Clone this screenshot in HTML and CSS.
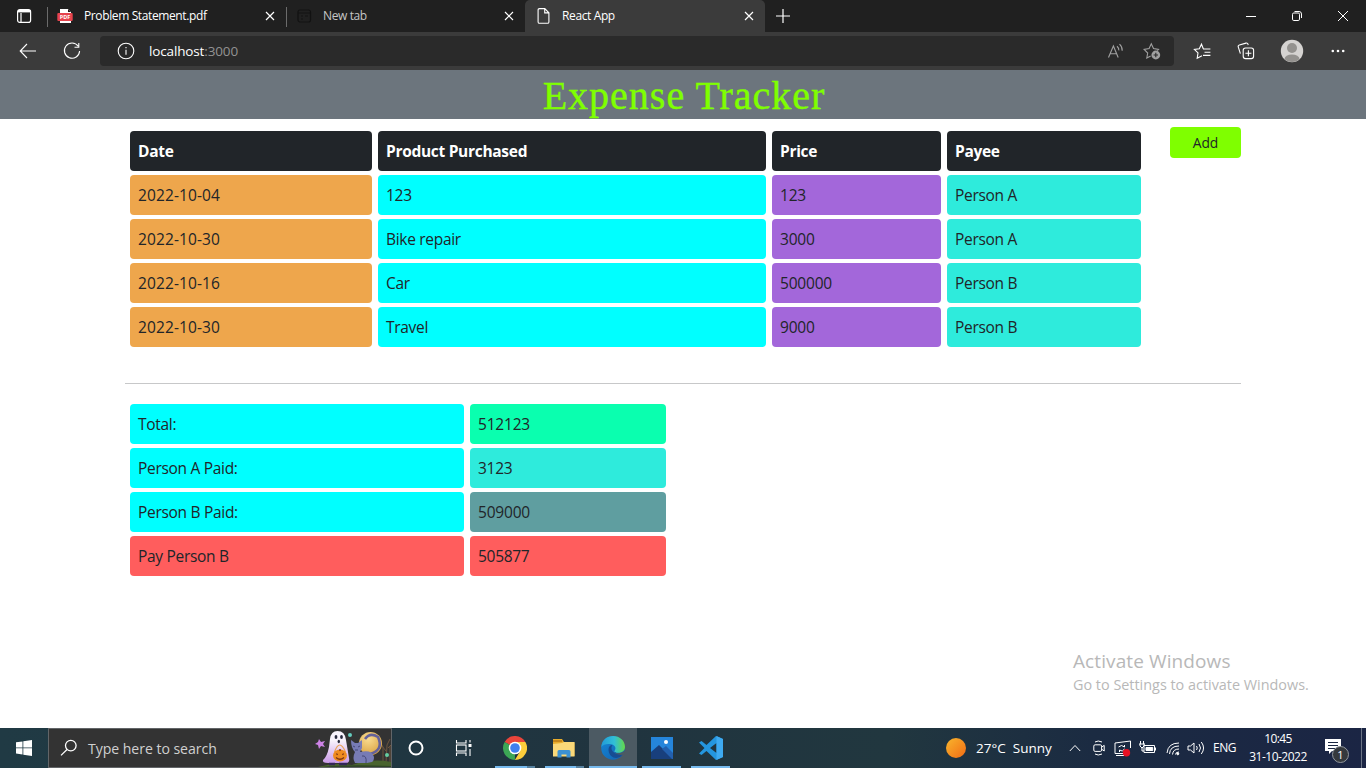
FILE: index.html
```html
<!DOCTYPE html>
<html lang="en">
<head>
<meta charset="utf-8">
<title>React App</title>
<link rel="stylesheet" href="styles.css">
</head>
<body>
<div class="screen">
  <div class="tabstrip">
    <div class="tab-actions">
      <svg width="16" height="16" viewBox="0 0 16 16" fill="none" stroke="#fff" stroke-width="1.2"><rect x="1.6" y="1.6" width="13" height="12.8" rx="2.2"/><path d="M2 3.2h12.4" stroke-width="2.4"/><path d="M5 5v9"/></svg>
    </div>
    <div class="tab tab-pdf">
      <svg class="favicon" width="16" height="16" viewBox="0 0 16 16"><path d="M3 1h8l3 3v11H3z" fill="#fff"/><path d="M11 1v3h3z" fill="#201515"/><rect x="0.3" y="5" width="15.4" height="8" rx="1" fill="#e6434d"/><text x="8" y="11.4" text-anchor="middle" class="pdf-text">PDF</text></svg>
      <span class="tab-title">Problem Statement.pdf</span>
      <svg class="close" width="10" height="10" viewBox="0 0 10 10"><path d="M1 1l8 8M9 1L1 9"/></svg>
    </div>
    <div class="tab tab-new">
      <svg class="favicon" width="16" height="16" viewBox="0 0 16 16" fill="none" stroke="#121212" stroke-width="1.2"><rect x="2" y="2" width="12.5" height="12" rx="2"/><path d="M2 5h12.5M5 8h2M9 8h3M5 11h2"/></svg>
      <span class="tab-title">New tab</span>
      <svg class="close" width="10" height="10" viewBox="0 0 10 10"><path d="M1 1l8 8M9 1L1 9"/></svg>
    </div>
    <div class="tab tab-active">
      <svg class="favicon" width="16" height="16" viewBox="0 0 16 16" fill="none" stroke="#fff" stroke-width="1.1"><path d="M4.500.6h5.300l4.100 4.200v9.100q0 1.400-1.400 1.400H4.500q-1.400 0-1.400-1.400V2Q3.100.6 4.500.6zM9.700.8v4.100h4.100"/></svg>
      <span class="tab-title">React App</span>
      <svg class="close" width="10" height="10" viewBox="0 0 10 10"><path d="M1 1l8 8M9 1L1 9"/></svg>
    </div>
    <svg class="plus" width="14" height="14" viewBox="0 0 14 14"><path d="M0 7h14M7 0v14"/></svg>
    <div class="window-controls">
      <svg width="46" height="32" viewBox="0 0 46 32"><path d="M18 16.5h10"/></svg>
      <svg width="46" height="32" viewBox="0 0 46 32"><rect x="18.500" y="13" width="7" height="7.500" rx="1.300"/><path d="M20.500 11.500h4.500q2.500 0 2.500 2.500v4"/></svg>
      <svg width="46" height="32" viewBox="0 0 46 32"><path d="M18 11l10 10M28 11L18 21"/></svg>
    </div>
  </div>

  <div class="toolbar">
    <svg class="back" width="18" height="16" viewBox="0 0 18 16"><path d="M17 8H1.500M8 1L1.200 8 8 15"/></svg>
    <svg class="reload" width="18" height="18" viewBox="0 0 18 18"><path d="M15.200 4.200A7.600 7.600 0 1 0 16.600 9M15.800 1v4.200h-4.300"/></svg>
    <div class="address">
      <svg width="18" height="18" viewBox="0 0 18 18"><circle cx="9" cy="9" r="7.800"/><path d="M9 7.800v5M9 5.100v1.200"/></svg>
      <span class="url">localhost<span class="port">:3000</span></span>
      <svg class="dim read" width="18" height="16" viewBox="0 0 18 16"><path d="M1.500 14.500L6.400 3l4.800 11.500M3.100 10.700h6.600M10 3.200q2 1.600 1.800 4.200M12.500 1.200q3 2.700 2.700 6.600"/></svg>
      <svg class="dim" width="18" height="18" viewBox="0 0 18 18"><path d="M7.700 14L3.800 16l.9-5L1.100 7.400l5-.8L8.300 1.800l2.200 4.800 5 .8-1.200 1.200"/><circle cx="12.800" cy="13" r="4.400" class="dim-fill"/><path d="M10.600 13H15M12.800 10.800v4.400" stroke="#2a2a2a"/></svg>
    </div>
    <svg class="favorites" width="18" height="18" viewBox="0 0 18 18"><path d="M10 7h7.400M11.500 10.200h5.900M10 13.400h7.400M10.300 6.800L8.500 2.200 6.300 6.800l-4.900.7 3.600 3.400-.8 5.300 4.800-2.500"/></svg>
    <svg class="collections" width="18" height="18" viewBox="0 0 18 18"><path d="M3.400 11.700L1.300 5.200q-.5-1.600 1.100-2.100l6.500-2q1.600-.5 2.100 1.100l.3.800"/><rect x="6.200" y="6" width="10.400" height="10.600" rx="2.300"/><path d="M11.400 8.300v6M8.400 11.300h6"/></svg>
    <svg class="avatar" width="24" height="24" viewBox="0 0 24 24"><defs><clipPath id="face"><circle cx="12" cy="12" r="11"/></clipPath></defs><circle cx="12" cy="12" r="11.200" fill="#d5d3d1"/><g clip-path="url(#face)" fill="#94928f"><circle cx="12" cy="9" r="5"/><ellipse cx="12" cy="20" rx="7.500" ry="4.500"/></g></svg>
    <svg class="more" width="14" height="4" viewBox="0 0 14 4"><circle cx="1.800" cy="2" r="1.300"/><circle cx="7" cy="2" r="1.300"/><circle cx="12.200" cy="2" r="1.300"/></svg>
  </div>

  <header class="app-header"><h1>Expense Tracker</h1></header>

  <main class="page">
    <div class="top">
      <div class="expenses">
        <div class="cell head">Date</div><div class="cell head">Product Purchased</div><div class="cell head">Price</div><div class="cell head">Payee</div>
        <div class="cell date">2022-10-04</div><div class="cell product">123</div><div class="cell price">123</div><div class="cell payee">Person A</div>
        <div class="cell date">2022-10-30</div><div class="cell product">Bike repair</div><div class="cell price">3000</div><div class="cell payee">Person A</div>
        <div class="cell date">2022-10-16</div><div class="cell product">Car</div><div class="cell price">500000</div><div class="cell payee">Person B</div>
        <div class="cell date">2022-10-30</div><div class="cell product">Travel</div><div class="cell price">9000</div><div class="cell payee">Person B</div>
      </div>
      <button class="add">Add</button>
    </div>
    <hr class="rule">
    <div class="summary">
      <div class="cell product">Total:</div><div class="cell total">512123</div>
      <div class="cell product">Person A Paid:</div><div class="cell payee">3123</div>
      <div class="cell product">Person B Paid:</div><div class="cell person-b">509000</div>
      <div class="cell due">Pay Person B</div><div class="cell due">505877</div>
    </div>
  </main>

  <div class="watermark"><div class="wm-title">Activate Windows</div><div class="wm-sub">Go to Settings to activate Windows.</div></div>

  <div class="taskbar">
    <div class="start"><svg width="16" height="16" viewBox="0 0 16 16" fill="#fff"><path d="M0 2.300l6.500-.9v6.100H0zM7.300 1.300L16 0v7.500H7.300zM0 8.300h6.500v6.200L0 13.600zM7.300 8.300H16V16l-8.700-1.300z"/></svg></div>
    <div class="search">
      <svg class="lens" width="18" height="18" viewBox="0 0 18 18"><circle cx="10.800" cy="6.600" r="5.300"/><path d="M7 10.500L1 16.400"/></svg>
      <span class="search-text">Type here to search</span>
      <svg class="halloween" width="76" height="39" viewBox="0 0 76 39">
        <defs>
          <linearGradient id="ghost" x1="0" y1="0" x2="0" y2="1"><stop offset=".3" stop-color="#f8f2fb"/><stop offset="1" stop-color="#c99ae8"/></linearGradient>
          <radialGradient id="moon" cx=".4" cy=".3" r=".8"><stop offset="0" stop-color="#f9dc91"/><stop offset="1" stop-color="#d79e3c"/></radialGradient>
        </defs>
        <path d="M68 34V18l-3-5M71 34l1-18 3-6M71 22l-4-5M73 19l3-3M75 34V17" stroke="#6d553f" stroke-width="1" fill="none"/>
        <path d="M0 39q17-6 37-3 20-7 39-3v6z" fill="#49632e"/>
        <path d="M0 39q20-4 76-2v2z" fill="#2f4526"/>
        <circle cx="55.500" cy="14.500" r="11.500" fill="url(#moon)"/>
        <path d="M55 25q14-4 8-17-8-5-13 2" fill="none" stroke="#65629a" stroke-width="2.600"/>
        <path d="M8 31q4-3 6-13l1-8Q16 2 22.500 2 30 2 31 11l3 18q1 4-2 5H13q-6 0-5-3z" fill="url(#ghost)"/>
        <path d="M14 35h6M24 35h8" stroke="#332556" stroke-width="2.400"/>
        <ellipse cx="21" cy="8" rx="1.400" ry="2" fill="#27293d"/><ellipse cx="26.500" cy="8" rx="1.400" ry="2" fill="#27293d"/><ellipse cx="23.800" cy="12.500" rx="1.200" ry="1.700" fill="#27293d"/>
        <path d="M19.500 23q5-14 11 0" fill="none" stroke="#e9a45a" stroke-width="1.200"/>
        <ellipse cx="25" cy="26.500" rx="7" ry="6" fill="#ef8b20"/>
        <path d="M25 20v2M21.500 24.500l1 1.500M28.500 24.500l-1 1.500M21 28.500q4 3.500 8 0" stroke="#7c3213" stroke-width="1.300" fill="none"/>
        <path d="M36 11l4 3h3l4-3v8l-2 4q12-3 14 5 0 4-2 5l-5 1H40q-3-5 0-11-4-4-4-12z" fill="#777bb5"/>
        <path d="M38 17l2 1M43 18l2-1M40 21h3M47 27q5-1 4 7" stroke="#454876" fill="none"/>
        <path d="M4 10l2 3 4-1-2 3 2 3-4-1-2 3-1-4-3-1 3-2z" fill="#cc82e5"/>
        <circle cx="35" cy="6" r="2" fill="#65cdbf"/><circle cx="72" cy="26" r="2" fill="#65cda1"/>
      </svg>
    </div>
    <div class="task cortana"><svg width="18" height="18" viewBox="0 0 18 18"><circle cx="9" cy="9" r="6.500" fill="none" stroke="#fff" stroke-width="2"/></svg></div>
    <div class="task view"><svg width="18" height="16" viewBox="0 0 18 16" fill="none" stroke="#fff" stroke-width="1.100"><path d="M1.500 0v3h9.500V0M1.500 16v-3H11v3M15 0v2.500M15 9v7"/><rect x="1.500" y="5" width="9.500" height="6"/><path d="M13.500 5.500h3" stroke-width="3"/></svg></div>
    <div class="task chrome"><svg width="24" height="24" viewBox="0 0 24 24"><path d="M12 12L1.600 6A12 12 0 0 1 22.400 6z" fill="#e9453b"/><path d="M12 12l-.1 12A12 12 0 0 1 1.600 6z" fill="#3ca655"/><path d="M12 12V6h10.400A12 12 0 0 1 11.900 24l5.300-9z" fill="#fccd3b"/><circle cx="12" cy="12" r="6.300" fill="#fff"/><circle cx="12" cy="12" r="4.800" fill="#3f80ef"/></svg><span class="line"></span><span class="line-end"></span></div>
    <div class="task files"><svg width="22" height="20" viewBox="0 0 22 20"><path d="M0 1h9l2 3h9.500q1 0 1 1v13H0z" fill="#e9ad2c"/><path d="M0 6l9-1 2-1h10.500v14.500H0z" fill="#fbd979"/><path d="M0 2h9v2H0z" fill="#c6871c"/><path d="M4.500 19.500v-6q0-1.500 1.500-1.500h10q1.500 0 1.500 1.500v6h-4v-3h-5v3z" fill="#3c91d2"/></svg><span class="line"></span><span class="line-end"></span></div>
    <div class="task edge"><svg width="24" height="24" viewBox="0 0 24 24"><defs><linearGradient id="edge-top" x1="0" x2="1"><stop stop-color="#229bd8"/><stop offset=".55" stop-color="#31bfd7"/><stop offset="1" stop-color="#65d847"/></linearGradient><linearGradient id="edge-body" x1="0" x2="1" y1="0" y2="1"><stop stop-color="#1589d7"/><stop offset="1" stop-color="#1360af"/></linearGradient></defs><circle cx="12" cy="12" r="11.800" fill="url(#edge-body)"/><path d="M.3 11C1 3.500 6 0 12 0c7 0 12 5 12 10.800 0 4-3 6-7 6-3 0-4.500-1-3-2.800 1.500-2.500-.5-5.500-5-6C5 7.700 2 8.500.3 11z" fill="url(#edge-top)"/><path d="M7.500 14c0-3 1.500-5.500 4-5-2.500 3-.5 8 5 9 3 .5 5-.5 6-1-3 7-14 7-15-3z" fill="#174d93"/><path d="M14 14c-1.500 1.800 0 3.200 3 3.200 3 0 5-.9 6.500-2.500L24 18l-3 1c-6 0-9-3-7-5z" fill="#4c5a63"/></svg><span class="line"></span></div>
    <div class="task photos"><svg width="22" height="22" viewBox="0 0 22 22"><rect width="22" height="22" fill="#2585db"/><path d="M0 15L8 8l14 14H0z" fill="#183f7c"/><path d="M11 12l4-3 7 7v6h-1z" fill="#2260ae"/><circle cx="15" cy="5" r="2" fill="#fff"/></svg><span class="line"></span></div>
    <div class="task code"><svg width="24" height="24" viewBox="0 0 24 24"><path d="M17 0l7 3v18l-7 3L7.500 15 2.500 19 0 17.500 5.500 12 0 6.500 2.500 5l5 4zM17.500 7L11 12l6.500 5z" fill="#2496df" fill-rule="evenodd"/><path d="M17.500 0l6.500 3v18l-6.500 3z" fill="#3eaaf1"/></svg><span class="line"></span></div>
    <div class="tray">
      <span class="sun"></span>
      <span class="weather">27°C&nbsp; Sunny</span>
      <svg class="chevron" width="12" height="8" viewBox="0 0 12 8"><path d="M.8 7L6 1.500 11.200 7"/></svg>
      <svg class="meet" width="12" height="16" viewBox="0 0 12 16"><rect x=".8" y="4.800" width="7.800" height="6.600" rx="1.300"/><path d="M8.700 7l2.500-1.600v5.600L8.700 9.200M2 2q3-2 7 0M2 14q3 2 7 0"/></svg>
      <svg class="sync" width="18" height="17" viewBox="0 0 18 17"><path d="M16.500 8V1L1 3v10.500h8M2 15.500h8M4.500 7q3-3 6 0V5M10.500 9q-2 3.500-5 1v2"/><circle cx="12.500" cy="12.800" r="3.700" class="alert"/></svg>
      <svg class="battery" width="18" height="14" viewBox="0 0 18 14"><path d="M5 4.500h10.500v7H5zM16.500 6.500v3M1.500 0v3M4.500 0v3M0 3h6M1 3v2l2 2 2-2V3M3 7v3h2"/><path d="M7 6.500h6.700v3H7z" fill="#fff"/></svg>
      <svg class="wifi" width="14" height="15" viewBox="0 0 14 15"><path d="M1 12Q2 2 13 2M3.500 13Q4 5 13 5M6.500 13.500Q7 8 13 8M9.500 13.500q0-2.500 3.500-2.500"/><circle cx="11.800" cy="12.800" r="1" fill="#fff"/></svg>
      <svg class="sound" width="18" height="14" viewBox="0 0 18 14"><path d="M1 5h2.500L7 2v10L3.500 9H1zM9.500 5q1.500 2 0 4M12 3q3 4 0 8M14.300 1q4.500 6 0 12"/></svg>
      <span class="lang">ENG</span>
      <div class="clock"><span class="time">10:45</span><span>31-10-2022</span></div>
      <div class="notify"><svg width="25" height="26" viewBox="0 0 25 26"><path d="M1 2h16v12H8l-3 3v-3H1z" fill="#fff"/><path d="M4 5.500h10M4 8.500h10M4 11.500h7" stroke="#1b2843" stroke-width="1"/><circle cx="16.500" cy="17.500" r="8" fill="#35393d" stroke="#92989e"/><text x="16.500" y="21.500" text-anchor="middle" class="badge">1</text></svg></div>
      <span class="desktop-edge"></span>
    </div>
  </div>
</div>
</body>
</html>
```
FILE: styles.css
```css
* { box-sizing: border-box; }
body { margin: 0; font-family: "Open Sans", "Noto Sans", sans-serif; background: #fff; }
.screen { position: relative; width: 1366px; height: 768px; overflow: hidden; display: flex; flex-direction: column; }
svg { display: block; flex: none; }

.tabstrip { height: 32px; flex: none; background: #202020; display: flex; align-items: center; color: #fff; }
.tab-actions { width: 47px; padding-left: 16px; }
.tab { height: 32px; display: flex; align-items: center; padding: 0 10px; font-size: 12px; white-space: nowrap; }
.tab-pdf, .tab-new { background: linear-gradient(#6b6b6b, #6b6b6b) 0 60% / 1px 20px no-repeat; }
.tab-pdf { width: 239px; }
.tab-new { width: 239px; color: #c6c6c6; }
.tab-active { width: 240px; background: #3b3b3b; border-radius: 5px 5px 0 0; }
.favicon { margin-right: 11px; }
.tab-title { flex: 1; letter-spacing: -.38px; padding-bottom: 2px; }
.close { margin-right: 1px; }
.close, .plus { stroke: #fff; stroke-width: 1.2; fill: none; }
.pdf-text { font-size: 5.5px; font-weight: 700; fill: #fff; }
.plus { margin-left: 11px; }
.window-controls { display: flex; margin-left: auto; fill: none; stroke: #fff; stroke-width: 1; }

.toolbar { height: 38px; flex: none; background: #3b3b3b; display: flex; align-items: center; fill: none; stroke: #fff; stroke-width: 1.1; }
.back { margin-left: 19px; }
.reload { margin-left: 26px; margin-right: 19px; }
.address { width: 1074px; height: 30px; background: #2a2a2a; border-radius: 4px; display: flex; align-items: center; padding: 0 13px 0 17px; }
.url { margin-left: 14px; color: #fff; font-size: 13.5px; letter-spacing: -.14px; flex: 1; }
.port { color: #929292; }
.dim { stroke: #a0a0a0; }
.dim-fill { fill: #a0a0a0; stroke: none; }
.read { margin-right: 18px; }
.favorites { margin-left: 19px; }
.collections { margin-left: 26px; }
.avatar { margin-left: 25px; stroke: none; }
.more { margin-left: 27px; fill: #fff; stroke: none; }

.app-header { height: 49px; flex: none; background: #6c757d; }
.app-header h1 { margin: 0; padding-left: 2px; text-align: center; color: #7fff00; font: 400 40px/52px "Liberation Serif", serif; letter-spacing: 1px; -webkit-text-stroke: .4px #7fff00; }

.page { padding: 8px 125px 0; flex: 1; color: #212529; }
.top { display: flex; align-items: flex-start; justify-content: space-between; }
.expenses { display: grid; grid-template-columns: 242px 388px 169px 194px; grid-auto-rows: 40px; gap: 4px 6px; margin: 4px 0 0 5px; }
.cell { border-radius: 4px; padding: 0 8px; font-size: 15.5px; line-height: 41px; letter-spacing: -.3px; white-space: nowrap; }
.head { background: #212529; color: #fff; font-weight: 700; }
.date { background: #eea64c; letter-spacing: .12px; }
.product { background: #0ff; }
.price { background: #a367da; letter-spacing: -.2px; }
.payee { background: #2eebdc; }
.total { background: #0affaf; letter-spacing: -.2px; }
.person-b { background: #5f9ea0; letter-spacing: -.2px; }
.due { background: #ff5d5d; }
.add { width: 71px; height: 31px; padding: 0; border: 0; border-radius: 4px; background: #7fff00; color: #212529; font: 400 13.8px/32px "Open Sans", sans-serif; }
.rule { height: 1px; border: 0; margin: 36px 0 20px; background: #c7c8c9; }
.summary { display: grid; grid-template-columns: 334px 196px; grid-auto-rows: 40px; gap: 4px 6px; margin-left: 5px; }

.watermark { position: absolute; left: 1073px; top: 648px; color: #b8b8b8; white-space: nowrap; }
.wm-title { font-size: 19px; line-height: 27px; letter-spacing: .1px; }
.wm-sub { font-size: 14.4px; line-height: 19px; }

.taskbar { height: 40px; flex: none; display: flex; color: #fff; background: linear-gradient(90deg, #203a44, #20343f 45%, #21373f 65%, #1b2b42 80%, #1b2544); }
.start { width: 48px; padding: 12px 0 0 16px; }
.search { width: 344px; border: 1px solid #626568; background: #333; display: flex; align-items: center; overflow: hidden; }
.lens { margin-left: 11px; fill: none; stroke: #fff; stroke-width: 1.3; }
.search-text { margin-left: 10px; color: #d0d0d0; font-size: 14.1px; letter-spacing: -.05px; flex: 1; white-space: nowrap; }
.task { position: relative; width: 49px; display: flex; align-items: center; justify-content: center; }
.cortana { width: 47px; }
.view { width: 50px; }
.chrome { width: 51px; }
.files { width: 49px; }
.edge { width: 48px; background: #4c5a63; }
.line { position: absolute; left: 5px; right: 5px; bottom: 0; height: 2px; background: #76b9ed; }
.chrome .line { left: 6px; }
.chrome .line, .files .line { right: 13px; }
.line-end { position: absolute; right: 5px; bottom: 0; width: 8px; height: 2px; background: #56819f; }
.edge .line { left: 0; right: 0; }
.files svg { margin-right: 2px; }
.tray { margin-left: auto; display: flex; align-items: center; white-space: nowrap; }
.tray > svg { fill: none; stroke: #fff; stroke-width: 1; }
.sun { width: 20px; height: 20px; border-radius: 50%; background: linear-gradient(135deg, #f8b62d, #f26b14); }
.weather { width: 76px; margin-left: 10px; font-size: 13.5px; }
.chevron { margin-left: 17px; }
.meet { margin-left: 12px; }
.sync { margin-left: 9px; }
.tray .alert { fill: #e81123; stroke: none; }
.battery { margin-left: 7px; }
.wifi { margin-left: 9px; }
.sound { margin-left: 7px; }
.lang { width: 24px; margin-left: 8px; font-size: 12px; letter-spacing: -.5px; padding-bottom: 1px; }
.clock { width: 60px; margin-left: 11px; display: flex; flex-direction: column; align-items: center; font-size: 12px; line-height: 18px; letter-spacing: -.5px; }
.time { letter-spacing: -.65px; }
.notify { margin-left: 16px; padding-top: 4px; }
.badge { font-size: 11px; fill: #fff; }
.desktop-edge { width: 1px; height: 40px; margin: 0 4px 0 12px; background: #6b7485; }
```
